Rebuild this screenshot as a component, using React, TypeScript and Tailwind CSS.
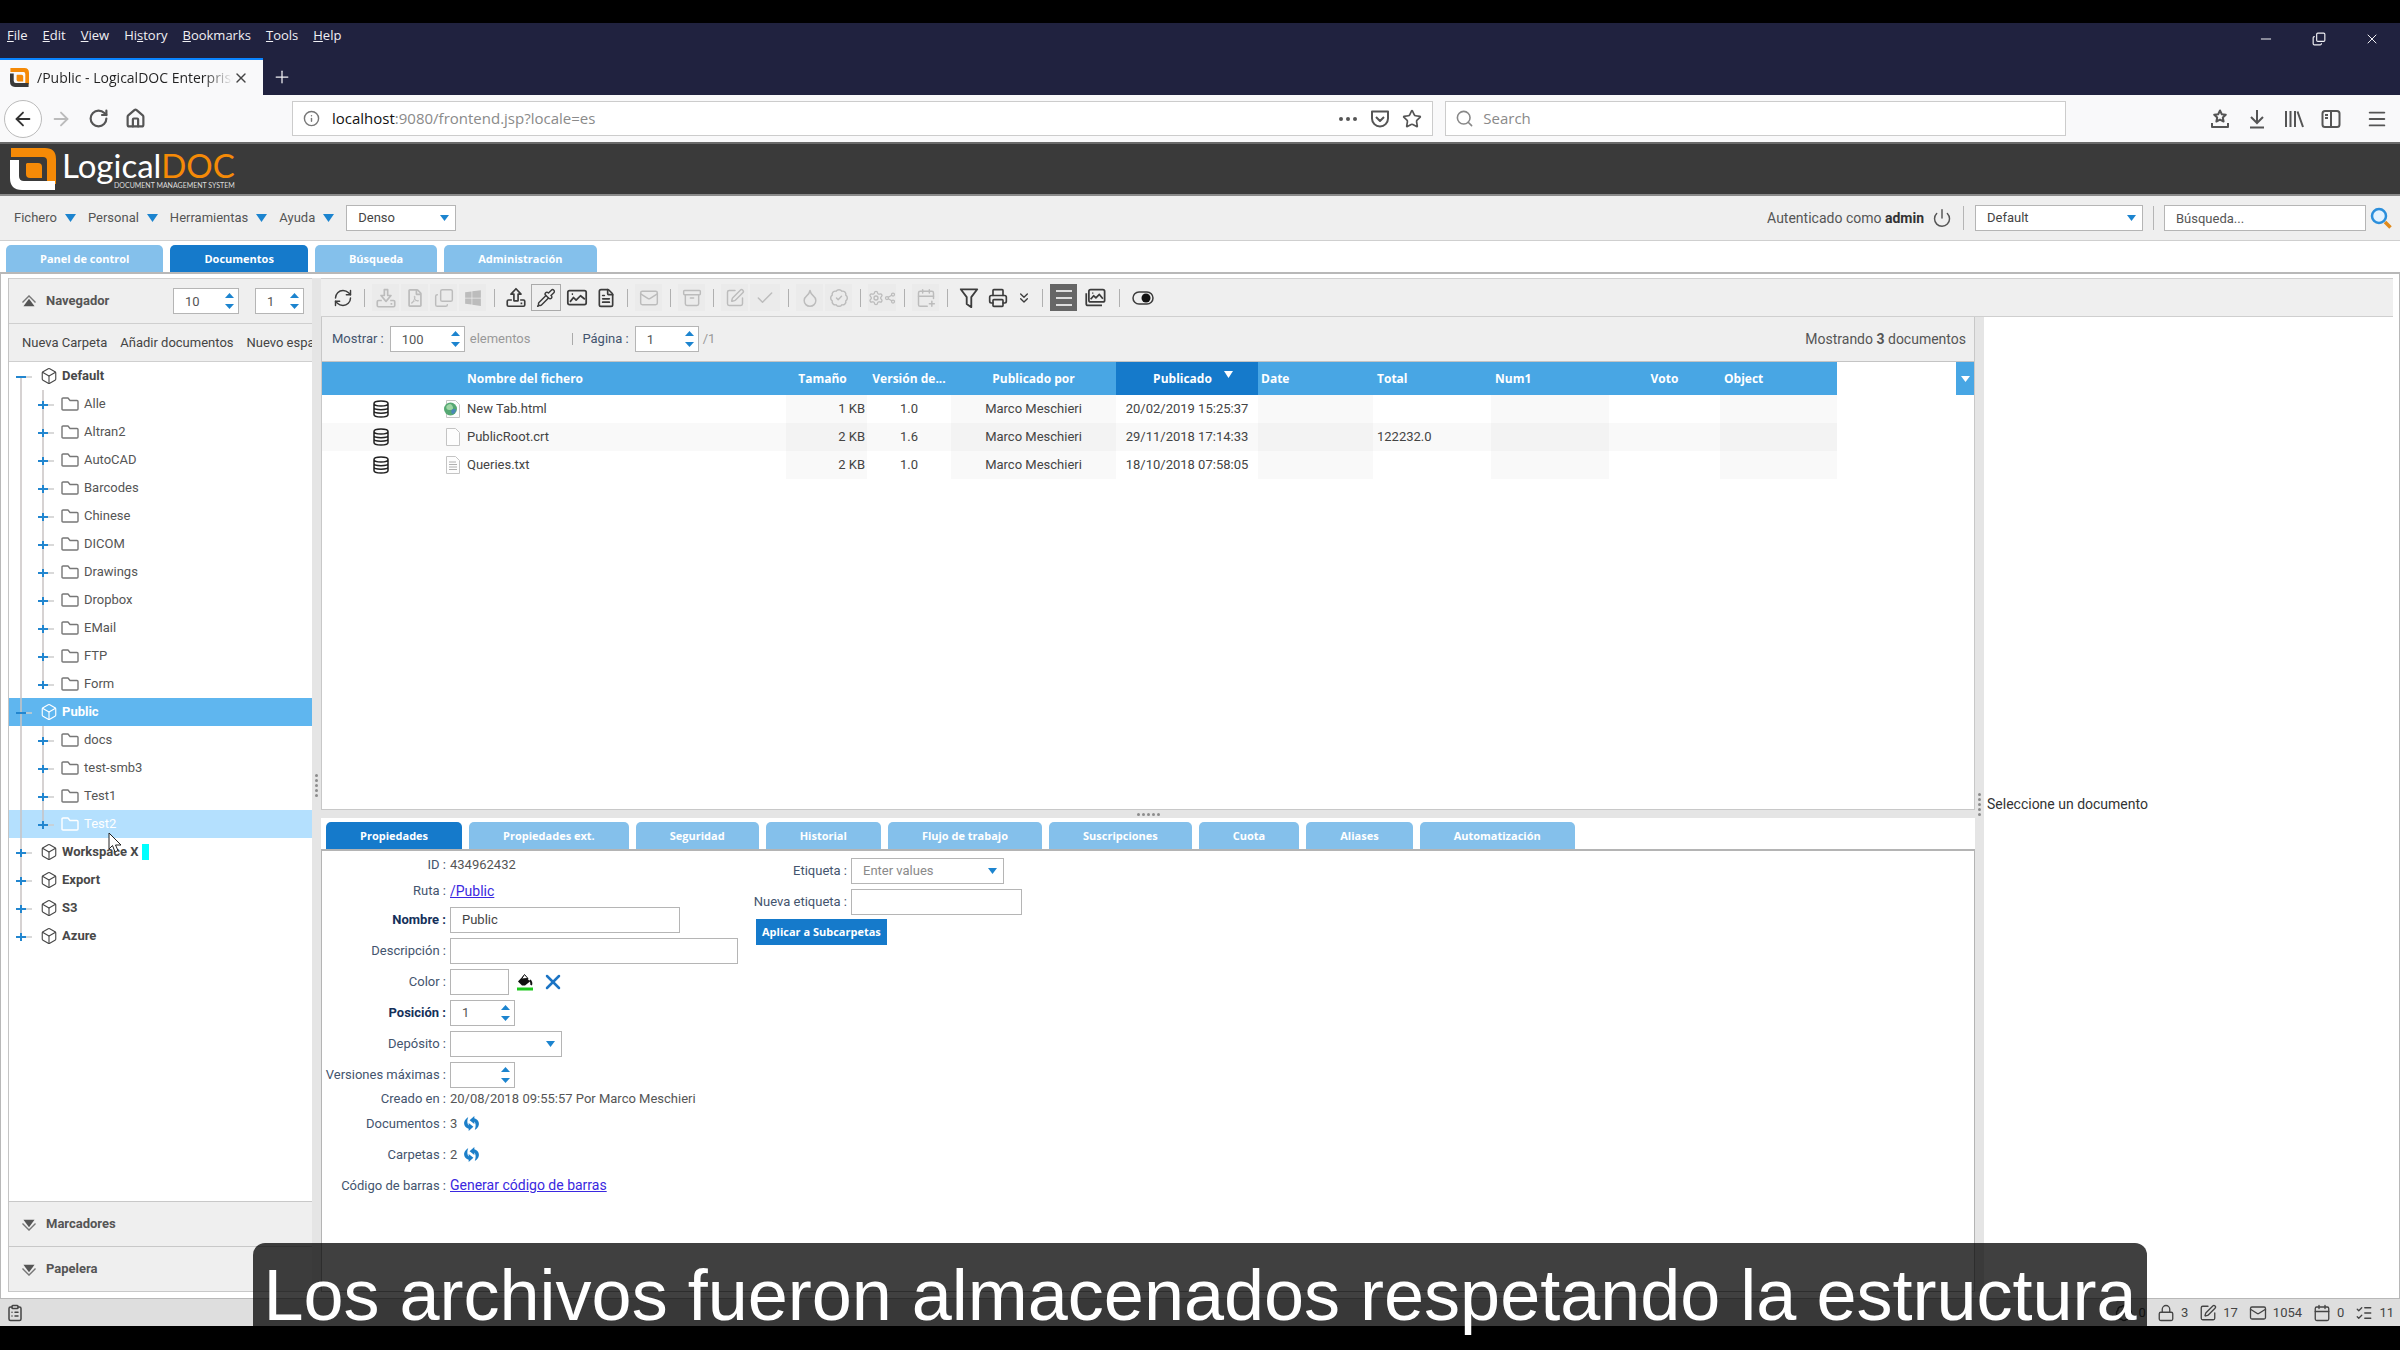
import { Fragment, ReactNode } from 'react';
import {
  Archive, ArrowLeft, ArrowRight, Badge, BadgeCheck, Box, CalendarPlus, Calendar, Check, ChevronsDown, ClipboardList,
  Copy, Droplet, FileText, Home, Info, ListChecks, Lock, Mail, Menu, Minus, Pipette, Plus, Power,
  Printer, RefreshCw, RotateCw, Search, Share2, Settings, SquarePen, Star, X,
} from 'lucide-react';
import { FaRegFilePdf, FaWindows } from 'react-icons/fa';

const browserMenus = [['', 'F', 'ile'], ['', 'E', 'dit'], ['', 'V', 'iew'], ['Hi', 's', 'tory'], ['', 'B', 'ookmarks'], ['', 'T', 'ools'], ['', 'H', 'elp']];

const appMenus = ['Fichero', 'Personal', 'Herramientas', 'Ayuda'];
const mainTabs = ['Panel de control', 'Documentos', 'Búsqueda', 'Administración'];
const detailTabs = ['Propiedades', 'Propiedades ext.', 'Seguridad', 'Historial', 'Flujo de trabajo', 'Suscripciones', 'Cuota', 'Aliases', 'Automatización'];

type Node = { name: string; color?: string; children?: string[] };

const tree: Node[] = [
  { name: 'Default', children: ['Alle', 'Altran2', 'AutoCAD', 'Barcodes', 'Chinese', 'DICOM', 'Drawings', 'Dropbox', 'EMail', 'FTP', 'Form'] },
  { name: 'Public', children: ['docs', 'test-smb3', 'Test1', 'Test2'] },
  { name: 'Workspace X', color: 'cyan' },
  { name: 'Export' },
  { name: 'S3' },
  { name: 'Azure' },
];

const files = [
  { name: 'New Tab.html', kind: 'html', size: '1 KB', version: '1.0', by: 'Marco Meschieri', date: '20/02/2019 15:25:37', total: '' },
  { name: 'PublicRoot.crt', kind: 'crt', size: '2 KB', version: '1.6', by: 'Marco Meschieri', date: '29/11/2018 17:14:33', total: '122232.0' },
  { name: 'Queries.txt', kind: 'txt', size: '2 KB', version: '1.0', by: 'Marco Meschieri', date: '18/10/2018 07:58:05', total: '' },
];

function Logo({ size, base }: { size: string; base: string }) {
  return (
    <svg viewBox="0 0 46 42" preserveAspectRatio="none" className={size}>
      <path d="M1 9V0h34q11 0 11 11v25h-9V13q0-4-4-4z" fill="#f58a07" />
      <path d="M0 12h9v16q0 5 5 5h31v9H12Q0 42 0 30z" fill={base} />
      <path d="M17 15h11q4 0 4 4v11H20q-4 0-4-4V16z" fill="#f58a07" />
    </svg>
  );
}

function Triangle({ up = false, className = 'w-[10px] h-[7px] fill-[#1c84cf]' }: { up?: boolean; className?: string }) {
  return <svg viewBox="0 0 10 7" preserveAspectRatio="none" className={className}><path d={up ? 'M0 7h10L5 0z' : 'M0 0h10L5 7z'} /></svg>;
}

function Spinner({ id, label, value, className }: { id: string; label?: string; value: string; className: string }) {
  return (
    <div className={`flex h-[26px] items-center border border-[#b5b5b5] bg-white pr-1 ${className}`}>
      <input id={id} aria-label={label} defaultValue={value} className="h-full w-full min-w-0 pl-[11px] text-[13px] text-[#555] outline-none" />
      <span className="flex flex-col gap-[6px]">
        <Triangle up className="h-[5px] w-[9px] fill-[#1c84cf]" />
        <Triangle className="h-[5px] w-[9px] fill-[#1c84cf]" />
      </span>
    </div>
  );
}

function Select({ id, label, value, className, muted }: { id: string; label?: string; value: string; className: string; muted?: boolean }) {
  return (
    <div className={`relative h-[26px] border border-[#b5b5b5] bg-white ${className}`}>
      <select id={id} aria-label={label} className={`h-full w-full appearance-none bg-transparent pl-[11px] text-[13px] outline-none ${muted ? 'text-[#8a8a8a]' : 'text-[#444]'}`}>
        <option>{value}</option>
      </select>
      <Triangle className="pointer-events-none absolute right-[6px] top-[9px] h-[6px] w-[9px] fill-[#1c84cf]" />
    </div>
  );
}

function Upload() {
  return (
    <svg viewBox="0 0 24 24" className="h-[23px] w-[20px] fill-none stroke-current stroke-2" strokeLinejoin="round">
      <path d="M12 1.500 18 8h-3.500v8h-5V8H6z" />
      <path d="M7 15H3a1.500 1.500 0 0 0-1.500 1.500v4.500A1.500 1.500 0 0 0 3 22.500h18a1.500 1.500 0 0 0 1.500-1.500v-4.500A1.500 1.500 0 0 0 21 15h-4M17.500 19h2" />
    </svg>
  );
}

function Download() {
  return (
    <svg viewBox="0 0 24 24" className="h-[22px] w-[20px] fill-none stroke-current stroke-2" strokeLinejoin="round">
      <path d="M10 2h4v7h4l-6 7-6-7h4z" />
      <path d="M7 15H3a1.500 1.500 0 0 0-1.500 1.500v4.500A1.500 1.500 0 0 0 3 22.500h18a1.500 1.500 0 0 0 1.500-1.500v-4.500A1.500 1.500 0 0 0 21 15h-4M17.500 19h2" />
    </svg>
  );
}

function Picture({ stacked = false }: { stacked?: boolean }) {
  return (
    <svg viewBox="0 0 24 24" className="h-[21px] w-[22px] fill-none stroke-current stroke-2" strokeLinejoin="round">
      {stacked ? (
        <>
          <rect x="5" y="3" width="18" height="14" rx="2" />
          <path d="M2 7v12q0 2 2 2h16M7 14l3.500-4 2.500 2.500 4-4 4 5M9 7h1" />
        </>
      ) : (
        <>
          <rect x="1.500" y="4" width="21" height="16" rx="2" />
          <path d="m4 17 4-5 3 3 5-5 5 4M6 8h1.500" />
        </>
      )}
    </svg>
  );
}

function Funnel() {
  return <svg viewBox="0 0 24 24" className="h-[22px] w-[22px] fill-none stroke-current stroke-2" strokeLinejoin="round"><path d="M3 2.500h18L14.500 11v11l-5-3.500V11z" /></svg>;
}

function Folder() {
  return <svg viewBox="0 0 18 14" className="h-[14px] w-[18px] shrink-0 fill-none stroke-current"><path strokeWidth="1.400" strokeLinejoin="round" d="M1 2q0-1 1-1h5l2 2.500h7q1 0 1 1V12q0 1-1 1H2q-1 0-1-1z" /></svg>;
}

function Disks() {
  return (
    <svg viewBox="0 0 16 18" className="mx-auto h-[18px] w-4 fill-none stroke-[#222] stroke-[1.500]">
      <path d="M1 3.500q0-2.500 7-2.500t7 2.500-7 2.500-7-2.500v11q0 2.500 7 2.500t7-2.500v-11M1 7.500q0 2.200 7 2.200t7-2.200M1 11q0 2.200 7 2.200t7-2.200" />
    </svg>
  );
}

function Recalculate() {
  const half = 'M5.500 3Q.500 6.500 1.200 10.500 2 14.500 6 15.500v2.500l5-4.500-5-4v2.500Q3.500 9 5.500 3z';
  return (
    <svg viewBox="0 0 18 20" className="h-[19px] w-[17px] fill-[#1c7fc9]">
      <path d={half} />
      <path d={half} transform="rotate(180 9 10)" />
    </svg>
  );
}

function FileIcon({ kind }: { kind: string }) {
  return (
    <svg viewBox="0 0 20 20" className="h-5 w-5 fill-none">
      <path d="M3.500 1.500h9l4 4v13h-13z" fill="#fdfdfd" stroke="#c4c4c4" />
      {kind === 'txt' && <path d="M6 7h7M6 9.500h8M6 12h8M6 14.500h8" stroke="#b0b0b0" />}
      {kind === 'html' && (
        <>
          <circle cx="7.500" cy="10" r="6.500" fill="#56a873" />
          <path d="M3.500 7q4-4 6 0t-3 4q-4 0-3-4z" fill="#9fd6a5" />
          <path d="M8 12q3-4 5-1-1 4-4 4z" fill="#4a86b8" />
        </>
      )}
    </svg>
  );
}

// one cell of the guide lines: vertical rail plus the open / close mark
function Rail({ mark, top = true, bottom = true }: { mark?: 'plus' | 'minus'; top?: boolean; bottom?: boolean }) {
  return (
    <svg viewBox="0 0 22 28" className="h-7 w-[22px] shrink-0">
      <path d={`M11 ${top ? 0 : 14}V${bottom ? 28 : 14}`} stroke="#c9c3c3" strokeWidth="1.500" />
      {mark && <path d="M14 15h8" stroke="#ccc" strokeWidth="1.500" />}
      {mark && <path d="M6 15h10" stroke="#2286cf" strokeWidth="2" />}
      {mark === 'plus' && <path d="M11 11v8" stroke="#2286cf" strokeWidth="2" />}
    </svg>
  );
}

function Tabs({ items, active }: { items: string[]; active: string }) {
  return (
    <div className="flex gap-[7px]">
      {items.map((t) => (
        <button key={t} className={`h-[27px] rounded-t-[5px] px-[34px] pt-px font-['Open_Sans',sans-serif] text-[11px] font-bold text-white ${t === active ? 'bg-[#157acb]' : 'bg-[#84c0eb]'}`}>{t}</button>
      ))}
    </div>
  );
}

function Tool({ label, children, off, className = 'w-[27px]' }: { label: string; children: ReactNode; off?: boolean; className?: string }) {
  return (
    <button aria-label={label} disabled={off} className={`flex h-[27px] items-center justify-center ${off ? 'bg-[#ebebeb] text-[#bcbcbc]' : 'text-[#3c3c3c]'} ${className}`}>
      {children}
    </button>
  );
}

const Sep = () => <span className="flex w-3 justify-center"><span className="h-[18px] w-px bg-[#b0b0b0]" /></span>;

function Section({ title, children, up, className }: { title: string; children?: ReactNode; up?: boolean; className: string }) {
  return (
    <div className={`flex shrink-0 items-center bg-[#efefef] pl-3 pr-2 ${className}`}>
      <svg viewBox="0 0 16 14" className={`mr-[9px] h-[13px] w-4 fill-[#555] ${up ? '' : 'rotate-180'}`}>
        <path d="M8 4 14 12H2z" />
        <path d="M1 8 8 1l7 7" fill="none" stroke="#777" strokeWidth="1.500" />
      </svg>
      <span className="grow text-[13px] font-bold text-[#555]">{title}</span>
      {children}
    </div>
  );
}

function Field({ label, id, bold, className = 'h-[31px]', children }: { label: string; id?: string; bold?: boolean; className?: string; children: ReactNode }) {
  return (
    <div className={`flex items-center gap-1 ${className}`}>
      <label htmlFor={id} className={`w-[124px] whitespace-nowrap text-right ${bold ? 'font-bold text-[#14305a]' : 'text-[#43546e]'}`}>{label} :</label>
      {children}
    </div>
  );
}

function BrowserChrome() {
  return (
    <header className="font-['Open_Sans',sans-serif]">
      <div className="flex h-[72px] flex-col justify-between bg-[#20223f] text-[#f0f0f4]">
        <div className="flex justify-between">
          <nav className="flex gap-[15px] pl-[7px] text-[13px] leading-[18px]">
            {browserMenus.map(([a, b, c]) => <button key={c}>{a}<u>{b}</u>{c}</button>)}
          </nav>
          <div className="flex items-center gap-[38px] pr-5 pt-2">
            <button aria-label="Minimizar"><Minus className="size-4" strokeWidth={1.5} /></button>
            <button aria-label="Restaurar"><Copy className="size-[14px] -scale-x-100 rotate-180" strokeWidth={2} /></button>
            <button aria-label="Cerrar"><X className="size-4" strokeWidth={1.5} /></button>
          </div>
        </div>
        <div className="flex items-center">
          <div className="flex h-[37px] w-[263px] items-center border-t-2 border-[#0a84ff] bg-[#f9f9fa] pl-[10px] pr-3">
            <Logo size="h-[19px] w-[19px] shrink-0" base="#3a3a3a" />
            <span className="ml-2 w-[196px] overflow-hidden whitespace-nowrap bg-linear-to-r from-[#222] from-85% to-transparent bg-clip-text text-[14px] text-transparent">/Public - LogicalDOC Enterprise</span>
            <button aria-label="Cerrar pestaña"><X className="size-4 text-[#444]" strokeWidth={2} /></button>
          </div>
          <button aria-label="Nueva pestaña" className="ml-[9px]"><Plus className="size-5" strokeWidth={1.5} /></button>
        </div>
      </div>
      <div className="flex h-[47px] items-center bg-[#f9f9fa] text-[#555]">
        <button aria-label="Atrás" className="ml-1 flex size-[38px] items-center justify-center rounded-full border border-[#bbb] bg-white"><ArrowLeft className="size-[22px] text-[#333]" /></button>
        <button aria-label="Adelante" className="ml-2"><ArrowRight className="size-[22px] text-[#bbb]" /></button>
        <button aria-label="Recargar" className="ml-4"><RotateCw className="size-[21px]" strokeWidth={2.5} /></button>
        <button aria-label="Inicio" className="ml-4"><Home className="size-[21px]" strokeWidth={2.5} /></button>
        <div className="ml-[146px] flex h-[35px] grow-[1144] basis-0 items-center border border-[#ccc] bg-white px-[10px]">
          <Info className="size-[17px] shrink-0 text-[#777]" />
          <a href="#url" className="ml-3 grow whitespace-nowrap text-[15px] text-[#8a8a8a]"><span className="text-[#111]">localhost</span>:9080/frontend.jsp?locale=es</a>
          <svg viewBox="0 0 20 6" className="h-[6px] w-5 fill-[#555]"><circle cx="3" cy="3" r="2" /><circle cx="10" cy="3" r="2" /><circle cx="17" cy="3" r="2" /></svg>
          <svg viewBox="0 0 20 18" className="ml-3 h-[18px] w-5 fill-none stroke-[#555] stroke-2" strokeLinejoin="round"><path d="M2 1.500h16v7a8 8 0 0 1-16 0zM6 7l4 4 4-4" /></svg>
          <Star className="ml-3 size-5" strokeWidth={2} />
        </div>
        <div className="ml-3 flex h-[35px] grow-[614] basis-0 items-center border border-[#ccc] bg-white px-[9px]">
          <Search className="size-[19px] shrink-0 text-[#888]" strokeWidth={2} />
          <input aria-label="Search" placeholder="Search" className="ml-[9px] min-w-0 grow text-[15px] outline-none placeholder:text-[#8a8a8a]" />
        </div>
        <div className="ml-36 flex items-center gap-[17px] pr-[12px]">
          <svg viewBox="0 0 20 20" className="size-5 fill-none stroke-[#555] stroke-2" strokeLinejoin="round"><path d="m10 1.500 1.800 3.700 4 .500-3 2.800.800 4L10 10.600l-3.600 1.900.800-4-3-2.800 4-.500zM2 14v4h16v-4" /></svg>
          <svg viewBox="0 0 20 20" className="size-5 fill-none stroke-[#555] stroke-2"><path d="M10 1v12M4 8l6 6 6-6M3 18.500h14" /></svg>
          <svg viewBox="0 0 20 20" className="size-5 fill-none stroke-[#555] stroke-2"><path d="M2 2v16M6.500 2v16M11 2v16M13.500 2.500 19 18" /></svg>
          <svg viewBox="0 0 20 20" className="size-5 fill-none stroke-[#555] stroke-2"><rect x="1.500" y="2" width="17" height="16" rx="2.500" /><path d="M10 2v16M4 6h3M4 9h3" /></svg>
          <Menu className="ml-2 size-[22px]" strokeWidth={2} />
        </div>
      </div>
    </header>
  );
}

function Sidebar() {
  return (
    <aside className="flex w-[304px] shrink-0 flex-col overflow-hidden border-l border-[#c4c4c4]">
      <Section title="Navegador" up className="h-[46px] border-y border-[#cfcfcf]">
        <Spinner id="max" label="Elementos" value="10" className="w-[66px]" />
        <Spinner id="page" label="Página" value="1" className="ml-4 w-[49px]" />
      </Section>
      <div className="flex h-[38px] shrink-0 items-center gap-[13px] overflow-hidden whitespace-nowrap border-b border-[#cfcfcf] bg-[#efefef] pl-[13px] text-[#444]">
        <button>Nueva Carpeta</button><button>Añadir documentos</button><button>Nuevo espacio</button>
      </div>
      <ul className="grow text-[#555]">
        {tree.map((n, i) => (
          <Fragment key={n.name}>
            <li className={`flex h-7 items-center pl-px font-bold ${n.name === 'Public' ? 'bg-[#5fb6ef] text-white' : 'text-[#484848]'}`}>
              <Rail mark={n.children ? 'minus' : 'plus'} top={i > 0} bottom={i < tree.length - 1} />
              <Box className="ml-2 size-[18px] shrink-0" strokeWidth={1.5} />
              <span className="ml-1">{n.name}</span>
              {n.color && <span className="ml-1 h-4 w-[7px] bg-[#00ffff]" />}
            </li>
            {n.children?.map((c, j) => (
              <li key={c} className={`relative flex h-7 items-center pl-px ${c === 'Test2' ? 'bg-[#b4e0fe] text-white' : ''}`}>
                <Rail />
                <Rail mark="plus" bottom={j < n.children!.length - 1} />
                <span className={`ml-[7px] ${c === 'Test2' ? 'text-white' : 'text-[#777]'}`}><Folder /></span>
                <span className="ml-[5px]">{c}</span>
                {c === 'Test2' && (
                  <svg viewBox="0 0 14 22" className="absolute left-[99px] top-[22px] z-10 h-[22px] w-[14px] fill-white stroke-[#222]"><path d="M1 1v16l3.500-3.500L7 20l3-1.500-2.500-5.500H13z" /></svg>
                )}
              </li>
            ))}
          </Fragment>
        ))}
      </ul>
      <Section title="Marcadores" className="h-[45px] border-t border-[#c8c8c8]" />
      <Section title="Papelera" className="h-[46px] border-y border-[#c8c8c8]" />
    </aside>
  );
}

function Toolbar() {
  return (
    <div className="flex h-[39px] items-center gap-[2px] border-y border-[#cfcfcf] bg-[#efefef] pl-2">
      <Tool label="Refrescar"><RefreshCw className="size-5" strokeWidth={1.75} /></Tool>
      <Sep />
      <Tool off label="Descargar"><Download /></Tool>
      <Tool off label="PDF"><FaRegFilePdf className="size-[18px]" /></Tool>
      <Tool off label="Copiar"><Copy className="size-5 -scale-x-100 rotate-180" strokeWidth={1.75} /></Tool>
      <Tool off label="Office"><FaWindows className="size-[18px]" /></Tool>
      <Sep />
      <Tool label="Subir"><Upload /></Tool>
      <Tool label="Soltar" className="w-[30px] border border-[#aaa]"><Pipette className="size-5" strokeWidth={1.75} /></Tool>
      <Tool label="Escanear"><Picture /></Tool>
      <Tool label="Formulario"><FileText className="size-5" strokeWidth={2} /></Tool>
      <Sep />
      <Tool off label="Correo"><Mail className="size-5" strokeWidth={1.75} /></Tool>
      <Sep />
      <Tool off label="Archivar"><Archive className="size-5" strokeWidth={1.75} /></Tool>
      <Sep />
      <Tool off label="Editar"><SquarePen className="size-5" strokeWidth={1.75} /></Tool>
      <Tool off label="Aceptar" className="w-[30px]"><Check className="size-5" strokeWidth={1.75} /></Tool>
      <Sep />
      <Tool off label="Sello"><Droplet className="size-5" strokeWidth={1.75} /></Tool>
      <Tool off label="Firmar"><BadgeCheck className="size-5" strokeWidth={1.75} /></Tool>
      <Sep />
      <Tool off label="Automatizar" className="w-[28px]"><Settings className="size-4" strokeWidth={2} /><Share2 className="size-[12px]" strokeWidth={2.5} /></Tool>
      <Sep />
      <Tool off label="Calendario"><CalendarPlus className="size-5" strokeWidth={1.75} /></Tool>
      <Sep />
      <Tool label="Filtrar"><Funnel /></Tool>
      <Tool label="Imprimir"><Printer className="size-5" strokeWidth={2} /></Tool>
      <Tool label="Exportar" className="w-[21px]"><ChevronsDown className="size-4" strokeWidth={2} /></Tool>
      <Sep />
      <button aria-label="Lista" className="flex h-[27px] w-[27px] flex-col items-center justify-center gap-[5px] bg-[#666]">
        <span className="h-[2px] w-4 bg-[#ddd]" /><span className="h-[2px] w-4 bg-[#ddd]" /><span className="h-[2px] w-4 bg-[#ddd]" />
      </button>
      <Tool label="Galería" className="w-8"><Picture stacked /></Tool>
      <Sep />
      <Tool label="Previsualizar" className="w-8">
        <svg viewBox="0 0 22 14" className="h-[14px] w-[22px]"><rect x="1" y="1" width="20" height="12" rx="6" className="fill-none stroke-current stroke-[1.500]" /><circle cx="14" cy="7" r="4.500" fill="#111" /></svg>
      </Tool>
    </div>
  );
}

const shade = 'bg-black/[0.025]';

function Documents() {
  return (
    <section className="flex h-[493px] flex-col border-x border-b border-[#c8c8c8] bg-white">
      <div className="flex h-[45px] shrink-0 items-center border-b border-[#c4c4c4] bg-[#efefef] pl-[10px] pr-2 text-[#43546e]">
        <label htmlFor="show">Mostrar :</label>
        <Spinner id="show" value="100" className="ml-[6px] w-[75px]" />
        <span className="ml-[5px] text-[#999]">elementos</span>
        <span className="ml-[42px] mr-[9px] h-3 w-px bg-[#aaa]" />
        <label htmlFor="pg">Página :</label>
        <Spinner id="pg" value="1" className="ml-[6px] w-16" />
        <span className="ml-1 text-[#999]">/1</span>
        <span className="ml-auto text-[14px] text-[#555]">Mostrando <b>3</b> documentos</span>
      </div>
      <div className="flex items-start justify-between">
        <table className="table-fixed">
          <colgroup>
            <col className="w-[117px]" /><col className="w-[28px]" /><col className="w-[319px]" /><col className="w-[81px]" />
            <col className="w-[84px]" /><col className="w-[165px]" /><col className="w-[142px]" /><col className="w-[115px]" />
            <col className="w-[118px]" /><col className="w-[118px]" /><col className="w-[111px]" /><col className="w-[117px]" />
          </colgroup>
          <thead className="h-[33px] bg-[#48a6e4] font-['Open_Sans',sans-serif] text-[12px] text-white">
            <tr>
              <th /><th />
              <th className="text-left">Nombre del fichero</th>
              <th className="pr-2">Tamaño</th>
              <th className="whitespace-nowrap">Versión de...</th>
              <th>Publicado por</th>
              <th className="bg-[#157acb] pl-3">
                <span className="flex items-center justify-center gap-3">Publicado<Triangle className="-mt-2 h-[7px] w-[9px] fill-white" /></span>
              </th>
              <th className="pl-[3px] text-left">Date</th>
              <th className="pl-1 text-left">Total</th>
              <th className="pl-1 text-left">Num1</th>
              <th>Voto</th>
              <th className="pl-1 text-left">Object</th>
            </tr>
          </thead>
          <tbody className="text-[#444]">
            {files.map((f) => (
              <tr key={f.name} className="h-7 even:bg-[#f9f9f9]">
                <td><Disks /></td>
                <td><span className="flex justify-center"><FileIcon kind={f.kind} /></span></td>
                <td>{f.name}</td>
                <td className={`pr-[2px] text-right ${shade}`}>{f.size}</td>
                <td className="text-center">{f.version}</td>
                <td className={`text-center ${shade}`}>{f.by}</td>
                <td className="text-center">{f.date}</td>
                <td className={shade} />
                <td className="pl-1">{f.total}</td>
                <td className={shade} />
                <td />
                <td className={shade} />
              </tr>
            ))}
          </tbody>
        </table>
        <button aria-label="Columnas" className="flex h-[33px] w-[18px] items-center justify-center bg-[#48a6e4]"><Triangle className="h-[6px] w-[9px] fill-white" /></button>
      </div>
    </section>
  );
}

function Properties() {
  const refresh = <button type="button" aria-label="Recalcular" className="ml-[2px]"><Recalculate /></button>;
  const box = 'h-[26px] border border-[#b5b5b5] bg-white pl-[11px] text-[#444] outline-none';
  return (
    <section className="flex grow flex-col bg-white pt-1">
      <div className="pl-[5px]"><Tabs items={detailTabs} active="Propiedades" /></div>
      <form className="flex grow items-start border border-t-2 border-[#b4b4b4] pt-px text-[#555]">
        <div className="w-[427px]">
          <Field label="ID" className="h-[26px]">434962432</Field>
          <Field label="Ruta" className="h-[26px]"><a href="#ruta" className="text-[14px] text-[#3a28e0] underline">/Public</a></Field>
          <Field label="Nombre" id="name" bold><input id="name" defaultValue="Public" className={`w-[230px] ${box}`} /></Field>
          <Field label="Descripción" id="desc"><input id="desc" className={`w-[288px] ${box}`} /></Field>
          <Field label="Color" id="color">
            <input id="color" className={`w-[59px] ${box}`} />
            <svg viewBox="0 0 16 18" className="ml-1 h-[18px] w-4 shrink-0"><path d="M1 8.500 7 2l6 6.500-5 4H5z" fill="#111" /><path d="m4.500 6 3-4.500 3.500 4z" fill="#fff" stroke="#111" /><path d="M13 7q2 3 1 5" stroke="#111" strokeWidth="2" fill="none" /><path d="M0 14.500h16v3H0z" fill="#1cc71c" /></svg>
            <button type="button" aria-label="Quitar color" className="ml-1"><X className="size-6 text-[#1c74c4]" strokeWidth={2.5} /></button>
          </Field>
          <Field label="Posición" id="pos" bold><Spinner id="pos" value="1" className="w-[65px]" /></Field>
          <Field label="Depósito" id="store"><Select id="store" value="" className="w-[112px]" /></Field>
          <Field label="Versiones máximas" id="vers"><Spinner id="vers" value="" className="w-[65px]" /></Field>
          <Field label="Creado en" className="h-[18px]">20/08/2018 09:55:57 Por Marco Meschieri</Field>
          <Field label="Documentos">3 {refresh}</Field>
          <Field label="Carpetas">2 {refresh}</Field>
          <Field label="Código de barras"><a href="#barcode" className="text-[14px] text-[#3a28e0] underline">Generar código de barras</a></Field>
        </div>
        <div className="pt-1">
          <div className="flex h-[30px] items-center gap-1"><label htmlFor="tag" className="w-[98px] text-right text-[#43546e]">Etiqueta :</label><Select id="tag" value="Enter values" muted className="w-[153px]" /></div>
          <div className="flex h-[31px] items-center gap-1"><label htmlFor="newtag" className="w-[98px] whitespace-nowrap text-right text-[#43546e]">Nueva etiqueta :</label><input id="newtag" className={`w-[171px] ${box}`} /></div>
          <button type="button" className="ml-[7px] mt-[2px] h-[26px] bg-[#157acb] px-[6px] font-['Open_Sans',sans-serif] text-[11px] font-bold text-white">Aplicar a Subcarpetas</button>
        </div>
      </form>
    </section>
  );
}

function Grip({ vertical = false }: { vertical?: boolean }) {
  return (
    <div className={`flex shrink-0 items-center justify-center gap-[2px] bg-[#e5e5e5] ${vertical ? 'w-[9px] flex-col' : 'h-2'}`}>
      {[0, 1, 2, 3, 4].map((i) => <span key={i} className="size-[3px] rounded-full bg-[#8c8c8c]" />)}
    </div>
  );
}

function StatusBar() {
  const items: [ReactNode, string][] = [
    [<Badge className="size-[18px]" />, '0'],
    [<Lock className="size-[18px]" strokeWidth={1.75} />, '3'],
    [<SquarePen className="size-[18px]" strokeWidth={1.75} />, '17'],
    [<Mail className="size-[18px]" strokeWidth={1.75} />, '1054'],
    [<Calendar className="size-[18px]" strokeWidth={1.75} />, '0'],
    [<ListChecks className="size-[18px]" strokeWidth={1.75} />, '11'],
  ];
  return (
    <footer className="flex h-[27px] items-center justify-between bg-[#dedede] px-[6px] text-[#444]">
      <ClipboardList className="size-[18px]" strokeWidth={2} />
      <div className="flex items-center gap-[11px]">
        {items.map(([icon, n], i) => <span key={i} className="flex items-center gap-[6px]">{icon}{n}</span>)}
      </div>
    </footer>
  );
}

export default function App() {
  return (
    <div className="relative flex min-h-screen flex-col bg-black pb-6 pt-[23px] font-['Roboto',sans-serif] text-[13px]">
      <BrowserChrome />

      <div className="flex h-[54px] items-center border-y-2 border-[#6a6a6a] border-b-[#8a8a8a] bg-[#3a3a3a] pl-[10px]">
        <Logo size="h-[42px] w-[46px]" base="#fff" />
        <div className="ml-[6px] flex flex-col items-end font-['Lato',sans-serif] text-white">
          <span className="text-[33px] leading-[32px]">Logical<span className="text-[#f58a07]">DOC</span></span>
          <span className="text-[7px] leading-[9px] text-[#ddd]">DOCUMENT MANAGEMENT SYSTEM</span>
        </div>
      </div>

      <div className="flex h-[45px] items-center border-b border-[#cfcfcf] bg-[#efefef] pl-[14px] text-[#555]">
        {appMenus.map((m) => (
          <button key={m} className="mr-3 flex items-center gap-2">{m}<Triangle className="h-[8px] w-[11px] fill-[#1c84cf]" /></button>
        ))}
        <Select id="density" label="Densidad" value="Denso" className="w-[110px]" />
        <span className="ml-auto text-[14px]">Autenticado como <b className="text-[#333]">admin</b></span>
        <button aria-label="Salir" className="ml-2"><Power className="size-5" strokeWidth={1.75} /></button>
        <span className="mx-[11px] h-6 w-px bg-[#b5b5b5]" />
        <Select id="tenant" label="Espacio" value="Default" className="w-[168px]" />
        <span className="mx-[10px] h-6 w-px bg-[#b5b5b5]" />
        <input aria-label="Búsqueda" placeholder="Búsqueda..." className="h-[26px] w-[202px] border border-[#b5b5b5] bg-white pl-[11px] outline-none placeholder:text-[#555]" />
        <button aria-label="Buscar" className="ml-1 mr-2">
          <svg viewBox="0 0 22 22" className="size-[22px] fill-none"><path d="m15 15 5.500 5.500" stroke="#e08a1c" strokeWidth="3.500" /><circle cx="9" cy="9" r="7" fill="#e4f3ff" stroke="#2b8fdc" strokeWidth="2.500" /></svg>
        </button>
      </div>

      <div className="bg-white pl-[6px] pt-1"><Tabs items={mainTabs} active="Documentos" /></div>

      <main className="flex grow border border-t-2 border-[#b8b8b8] bg-white pb-[6px] pl-[7px] pr-[6px] pt-1">
        <Sidebar />
        <Grip vertical />
        <div className="flex min-w-0 grow flex-col">
          <Toolbar />
          <div className="flex grow">
            <div className="flex min-w-0 grow flex-col">
              <Documents />
              <Grip />
              <Properties />
            </div>
            <Grip vertical />
            <div className="flex w-[409px] shrink-0 items-center pl-[3px] text-[14px] text-[#333]">Seleccione un documento</div>
          </div>
        </div>
      </main>

      <StatusBar />

      <div className="pointer-events-none absolute inset-x-0 bottom-6 flex justify-center">
        <p className="h-[83px] whitespace-nowrap rounded-t-xl bg-black/75 px-[10px] pt-3 font-['Liberation_Sans',Arial,sans-serif] text-[72px] leading-[80px] text-white">
          Los archivos fueron almacenados respetando la estructura
        </p>
      </div>
    </div>
  );
}
